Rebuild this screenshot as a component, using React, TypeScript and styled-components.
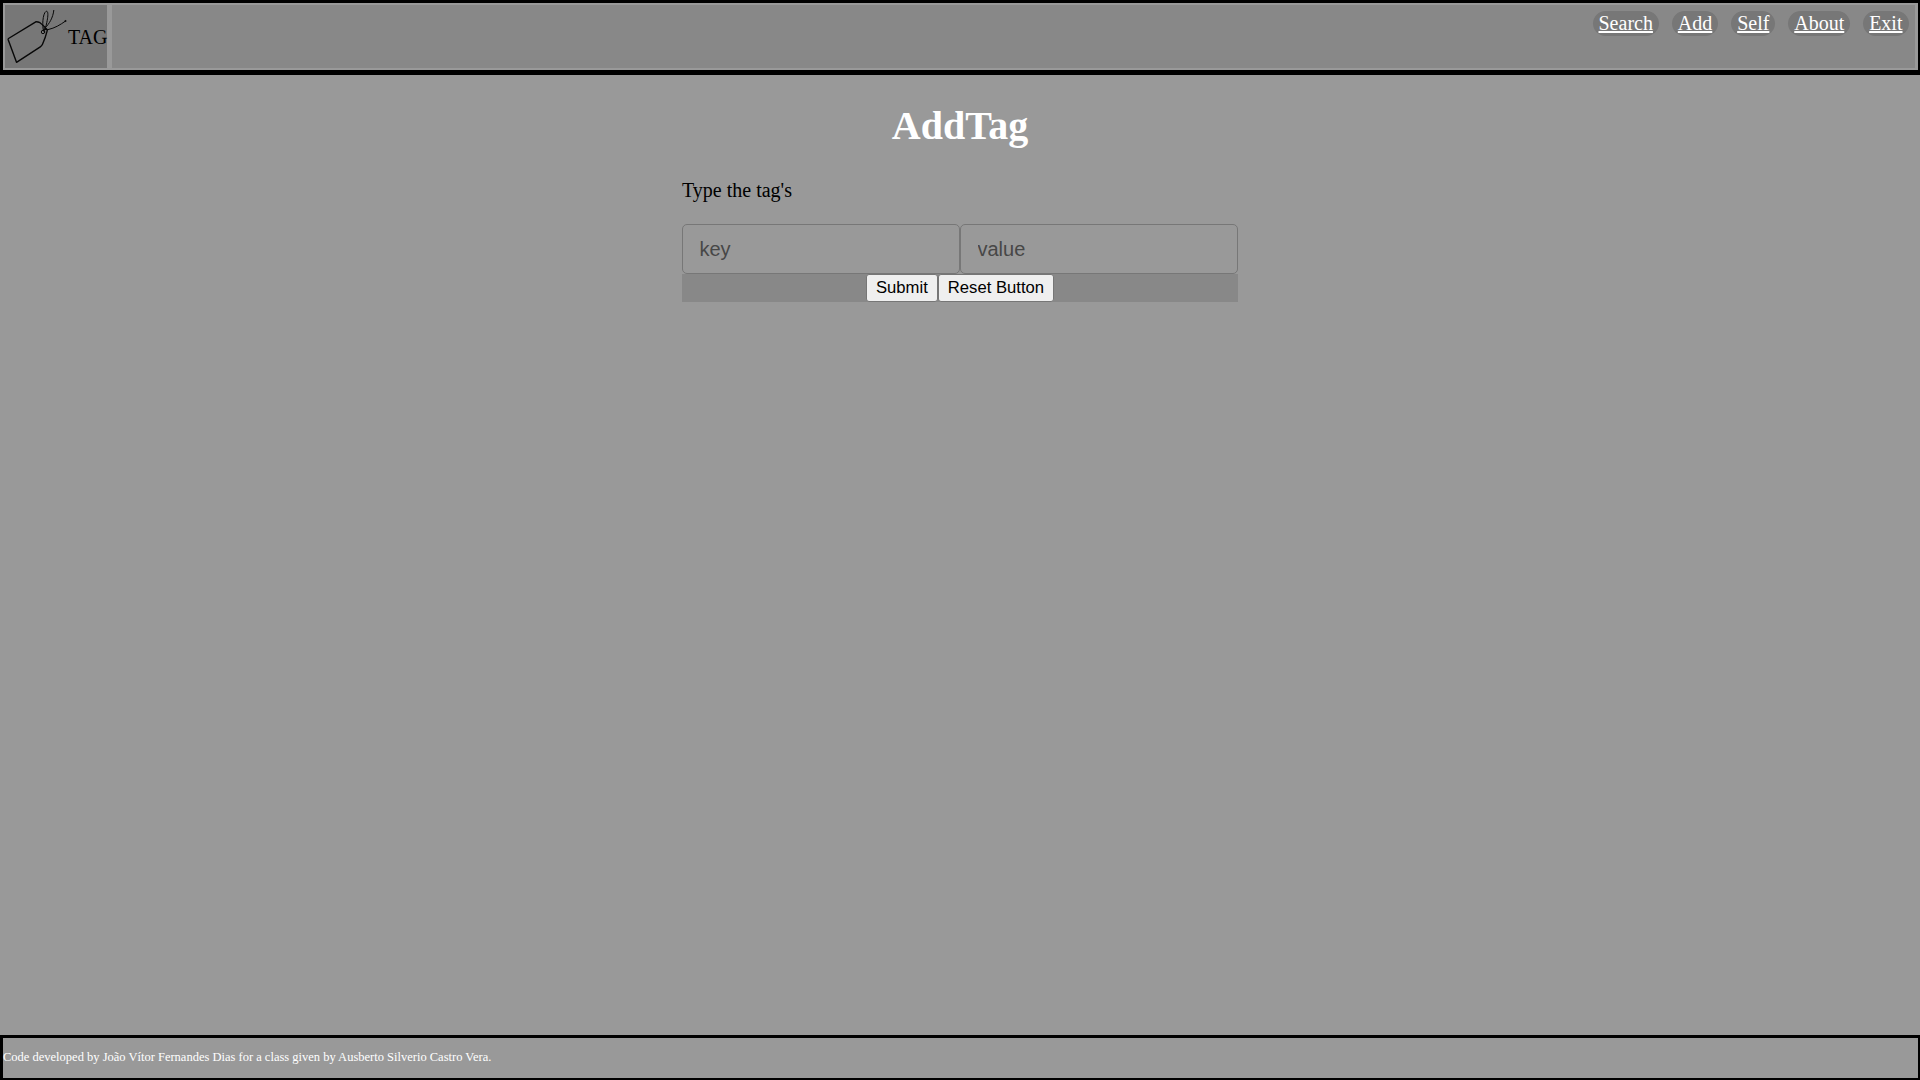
import React from "react";
import styled, { createGlobalStyle } from "styled-components";

const GlobalStyle = createGlobalStyle`
  * { box-sizing: border-box; }
  body {
    margin: 0;
    background: #999;
    color: #000;
    font-family: "Liberation Serif", "Times New Roman", serif;
    font-size: 20px;
    overflow: hidden;
  }
`;

const Page = styled.div`
  display: flex;
  flex-direction: column;
  height: 100vh;
`;

const Header = styled.header`
  display: flex;
  gap: 5px;
  height: 75px;
  padding: 2px 3px 2px 2px;
  border: solid #000;
  border-width: 3px 2px 5px 3px;
`;

const Logo = styled.div`
  display: flex;
  align-items: center;
  width: 102px;
  background: #777;
  white-space: nowrap;
`;

const LogoText = styled.span`
  padding-top: 2px;
`;

const TagDrawing = styled.svg`
  flex: none;
  width: 63px;
  height: 63px;
`;

const Nav = styled.nav`
  flex: 1;
  display: flex;
  justify-content: flex-end;
  align-items: flex-start;
  gap: 12.9px;
  padding: 6px 6.5px 0 0;
  background: #888;
`;

const NavLink = styled.a`
  height: 25px;
  padding: 0 6px;
  border-radius: 13px;
  background: #777;
  color: #fff;
  line-height: 25px;
  text-decoration: underline;
`;

const Main = styled.main`
  flex: 1;
  width: 556px;
  margin: 0 auto;
`;

const Title = styled.h1`
  margin: 28px 0 0;
  color: #fff;
  font-size: 40px;
  line-height: 46px;
  text-align: center;
`;

const Prompt = styled.p`
  margin: 30px 0 22px;
  line-height: 23px;
`;

const Fields = styled.div`
  display: flex;
`;

const Field = styled.input`
  width: 278px;
  height: 50px;
  padding: 0 16.5px;
  border: 1px solid #777;
  border-radius: 5px;
  background: transparent;
  font: 20px "Liberation Sans", Arial, sans-serif;
  &::placeholder { color: #474747; opacity: 1; }
`;

const Actions = styled.div`
  display: flex;
  justify-content: center;
  height: 28px;
  background: #888;
`;

const Button = styled.button`
  height: 28px;
  padding: 0 9px;
  border: 1px solid #767676;
  border-radius: 3px;
  background: #efefef;
  color: #000;
  font: 16.667px "Liberation Sans", Arial, sans-serif;
  line-height: 24px;
`;

const Footer = styled.footer`
  height: 45px;
  padding-top: 11px;
  border: solid #000;
  border-width: 3px 2px 2px 3px;
  color: #fff;
  font-size: 12.5px;
  line-height: 16px;
`;

const links = ["Search", "Add", "Self", "About", "Exit"];

export default function App() {
  return (
    <Page>
      <GlobalStyle />
      <Header>
        <Logo>
          <TagDrawing viewBox="5 5 63 63" fill="none" stroke="#080808" strokeLinecap="round" strokeLinejoin="round">
            <path strokeWidth="1.4" d="M36.2 21.7L8.5 38.5Q7.9 38.9 8.2 39.8L16.5 62.3L40.3 46.8Q41.8 45.8 42.5 44.2Q45.5 37.5 47.3 30.3L45 27.2Q42 24.2 40 22.7Q38 21.7 36.2 21.7Z" />
            <path strokeWidth="1" d="M43.5 30.5C42 27 42.6 13.5 46 11.4C48.7 10.2 48 17 46.8 22.5C46 27 44.5 30 44 31.5M45.5 27.5C49 24 53 18 53.8 10.4M44 28L48 29.6C55 28 60 25 65.3 21.2M46.5 29.5L43.5 29.8" />
            <circle cx="43" cy="32" r="1.7" strokeWidth="1" />
            <circle cx="65.3" cy="21" r=".5" />
          </TagDrawing>
          <LogoText>TAG</LogoText>
        </Logo>
        <Nav>
          {links.map((label) => (
            <NavLink key={label} href="#">{label}</NavLink>
          ))}
        </Nav>
      </Header>
      <Main>
        <Title>AddTag</Title>
        <Prompt>Type the tag's</Prompt>
        <Fields>
          <Field placeholder="key" />
          <Field placeholder="value" />
        </Fields>
        <Actions>
          <Button type="button">Submit</Button>
          <Button type="button">Reset Button</Button>
        </Actions>
      </Main>
      <Footer>Code developed by João Vítor Fernandes Dias for a class given by Ausberto Silverio Castro Vera.</Footer>
    </Page>
  );
}
